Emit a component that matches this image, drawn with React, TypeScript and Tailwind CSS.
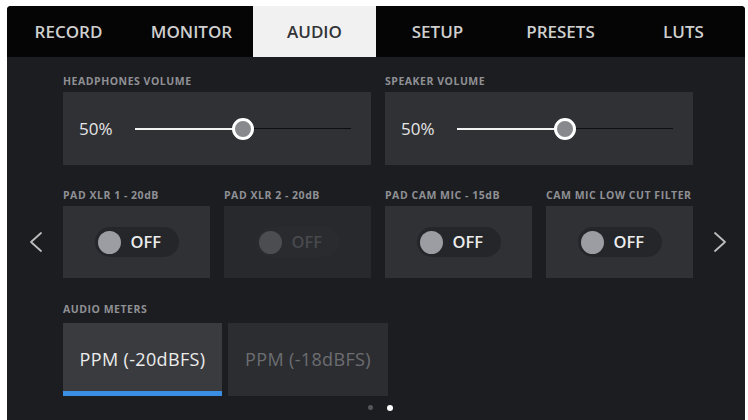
import React from 'react';

// Camera touchscreen — Audio settings page 1 of 2.

const TABS = ['RECORD', 'MONITOR', 'AUDIO', 'SETUP', 'PRESETS', 'LUTS'];
const ACTIVE_TAB = 'AUDIO';

const FONT = { fontFamily: '"Open Sans", "Liberation Sans", sans-serif' };

function Label({ children }: { children: React.ReactNode }) {
  return (
    <div className="h-[12px] text-[10.5px] font-bold leading-[12px] tracking-[0.05em] text-[#8f9094] whitespace-nowrap">
      {children}
    </div>
  );
}

function VolumePanel({ label, value }: { label: string; value: number }) {
  return (
    <div className="col-span-2 flex flex-col">
      <Label>{label}</Label>
      <div className="mt-[5px] flex h-[73px] items-center bg-[#303135] pl-[16px] pr-[20px]">
        <span className="w-[56px] text-[17px] text-[#e6e6e6]">{value}%</span>
        <div className="relative flex h-[22px] flex-1 items-center">
          <div className="h-[2px] bg-[#f2f2f2]" style={{ width: `${value}%` }} />
          <div className="h-px flex-1 bg-[#0e0e10]" />
          <div
            className="absolute top-0 h-[22px] w-[22px] -translate-x-1/2 rounded-full border-[3px] border-white bg-[#88898d]"
            style={{ left: `${value}%` }}
          />
        </div>
      </div>
    </div>
  );
}

function TogglePanel({ label, disabled }: { label: string; disabled?: boolean }) {
  return (
    <div className="flex flex-col">
      <Label>{label}</Label>
      <div
        className={[
          'mt-[5px] flex h-[72px] items-center justify-center',
          disabled ? 'bg-[#28292d]' : 'bg-[#303135]',
        ].join(' ')}
      >
        <div
          className={[
            'flex h-[30px] w-[84px] items-center gap-[10px] rounded-full pl-[3px]',
            disabled ? 'bg-[#2a2b2f]' : 'bg-[#25262a]',
          ].join(' ')}
        >
          <span className={['h-[23px] w-[23px] rounded-full', disabled ? 'bg-[#4c4d51]' : 'bg-[#9c9da2]'].join(' ')} />
          <span className={['text-[16.5px] font-semibold', disabled ? 'text-[#48494d]' : 'text-[#ececec]'].join(' ')}>
            OFF
          </span>
        </div>
      </div>
    </div>
  );
}

function Chevron({ dir }: { dir: 'left' | 'right' }) {
  return (
    <svg width={14} height={24} viewBox="0 0 14 24" fill="none" stroke="#bdbdbd" strokeWidth={1.8} strokeLinecap="round" strokeLinejoin="round">
      {dir === 'left' ? <path d="M12 3 L2 12 L12 21" /> : <path d="M2 3 L12 12 L2 21" />}
    </svg>
  );
}

export default function App() {
  return (
    <div className="h-[420px] w-[748px] overflow-hidden bg-white pl-[7px] pr-[3px] pt-[6px]" style={FONT}>
      <div className="flex h-full flex-col overflow-hidden rounded-tl-[4px] rounded-tr-[4px] bg-[#1c1d21]">
        {/* tab bar */}
        <div className="grid h-[51px] shrink-0 grid-cols-6 bg-[#050505]">
          {TABS.map((t) => (
            <div
              key={t}
              className={[
                'flex items-center justify-center text-[17px] font-semibold',
                t === ACTIVE_TAB ? 'bg-[#f1f1f1] text-[#333437]' : 'text-[#cfcfcf]',
              ].join(' ')}
            >
              {t}
            </div>
          ))}
        </div>

        {/* volume row */}
        <div className="mt-[18px] grid grid-cols-[56px_1fr_52px]">
          <div />
          <div className="grid grid-cols-4 gap-x-[14px]">
            <VolumePanel label="HEADPHONES VOLUME" value={50} />
            <VolumePanel label="SPEAKER VOLUME" value={50} />
          </div>
          <div />
        </div>

        {/* pad / filter row */}
        <div className="mt-[24px] grid grid-cols-[56px_1fr_52px]">
          <div className="flex items-end justify-center pb-[24px] pl-[2px]">
            <Chevron dir="left" />
          </div>
          <div className="grid grid-cols-4 gap-x-[14px]">
            <TogglePanel label="PAD XLR 1 - 20dB" />
            <TogglePanel label="PAD XLR 2 - 20dB" disabled />
            <TogglePanel label="PAD CAM MIC - 15dB" />
            <TogglePanel label="CAM MIC LOW CUT FILTER" />
          </div>
          <div className="flex items-end justify-center pb-[24px] pl-[2px]">
            <Chevron dir="right" />
          </div>
        </div>

        {/* audio meters */}
        <div className="mt-[25px] grid grid-cols-[56px_1fr_52px]">
          <div />
          <div className="flex flex-col">
            <Label>AUDIO METERS</Label>
            <div className="mt-[8px] flex gap-[6px]">
              <div className="flex h-[73px] w-[159px] flex-col bg-[#3a3b3f]">
                <div className="flex flex-1 items-center justify-center pt-[4px] text-[18px] tracking-[0.02em] text-[#ececec]">PPM (-20dBFS)</div>
                <div className="h-[5px] bg-[#3b8fe2]" />
              </div>
              <div className="flex h-[73px] w-[160px] items-center justify-center text-[18px] tracking-[0.02em] bg-[#2c2d31] text-[#6c6d71]">
                PPM (-18dBFS)
              </div>
            </div>
          </div>
          <div />
        </div>

        {/* page dots */}
        <div className="mt-[9px] flex justify-center gap-[14px] pl-[8px]">
          <span className="h-[5px] w-[5px] rounded-full bg-[#55565a]" />
          <span className="h-[6px] w-[6px] rounded-full bg-white" />
        </div>
      </div>
    </div>
  );
}
